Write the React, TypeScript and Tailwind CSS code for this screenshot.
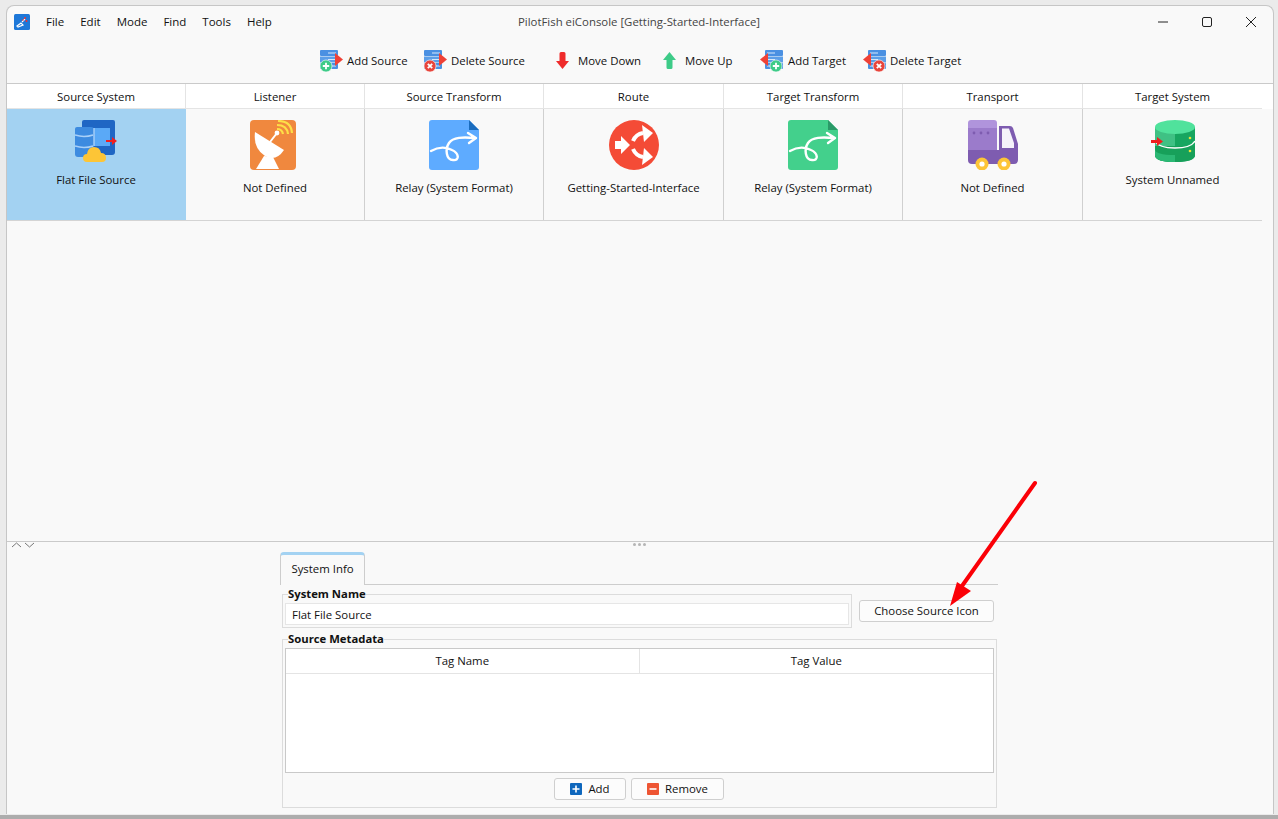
import type { ReactNode } from "react";

const font = "font-['Open_Sans','Liberation_Sans',sans-serif]";

function ServerIcon({ flip, badge }: { flip?: boolean; badge: "add" | "del" }) {
  // toolbar glyph: blue server, red arrow, round badge
  return (
    <svg width="23" height="22" viewBox="0 0 23 22">
      <g transform={flip ? "translate(23 0) scale(-1 1)" : undefined}>
        <rect x="0" y="0" width="18" height="6" rx="1" fill="#4a90e2" />
        <rect x="0" y="6.5" width="18" height="6" fill="#5b9ee8" />
        <rect x="0" y="13" width="18" height="6" rx="1" fill="#4a90e2" />
        <path d="M8 3h8M8 9.5h8M8 16h8" stroke="#d5e8fb" strokeWidth="1.2" />
        <path d="M15 3l8 6.5-8 6.5z" fill="#ef4136" />
      </g>
      <circle cx={flip ? 16 : 6} cy="16" r="6" fill={badge === "add" ? "#3ecb88" : "#e8453c"} stroke="#fff" strokeWidth="0.6" />
      {badge === "add" ? (
        <path d={flip ? "M16 12.8v6.4M12.8 16h6.4" : "M6 12.8v6.4M2.8 16h6.4"} stroke="#fff" strokeWidth="1.8" />
      ) : (
        <path d={flip ? "M13.8 13.8l4.4 4.4M18.2 13.8l-4.4 4.4" : "M3.8 13.8l4.4 4.4M8.2 13.8l-4.4 4.4"} stroke="#fff" strokeWidth="1.8" />
      )}
    </svg>
  );
}

function ArrowIcon({ up }: { up?: boolean }) {
  return (
    <svg width="15" height="17" viewBox="0 0 15 17">
      {up ? (
        <path d="M7.5 0L14 8H10.5V15.5Q10.5 17 9 17H6Q4.5 17 4.5 15.5V8H1z" fill="#3ecb88" />
      ) : (
        <path d="M7.5 17L14 9H10.5V1.5Q10.5 0 9 0H6Q4.5 0 4.5 1.5V9H1z" fill="#ef2b2b" />
      )}
    </svg>
  );
}

function SourceIcon() {
  return (
    <svg width="42" height="42" viewBox="0 0 42 42">
      <path d="M9 0H38Q40 0 40 2V32Q40 35 37 35H10Q7 35 7 32V2Q7 0 9 0Z" fill="#1f66c4" />
      <rect x="19" y="8" width="16" height="18" fill="#5aa9f7" />
      <path d="M2 7H16Q19 7 19 10V34Q19 37 16 37H3Q0 37 0 34V9Q0 7 2 7Z" fill="#3d8be0" />
      <path d="M0 15Q9 18 18 15M0 26Q9 29 18 26" stroke="#a9d0f8" strokeWidth="1.6" fill="none" />
      <path d="M19 8V26" stroke="#a9d0f8" strokeWidth="1.4" />
      <path d="M12 42Q8 42 8 38Q8 34 12 34Q13 27 19 27Q25 27 26 33Q31 33 31 38Q31 42 27 42Z" fill="#fdc536" />
      <path d="M31 20H37V17L42 21L37 25V22H31Z" fill="#f01f1f" />
    </svg>
  );
}

function DishIcon() {
  return (
    <svg width="46" height="50" viewBox="0 0 46 50" className="mr-[5px]">
      <rect width="46" height="50" rx="4" fill="#f0883e" />
      <path d="M5 12Q3 28 15 36Q26 42 34 30Z" fill="#fff" />
      <path d="M20 22L27 13" stroke="#fff" strokeWidth="2" />
      <circle cx="27" cy="13" r="2.4" fill="#fff" />
      <path d="M14 36L6 49H29L23 37Z" fill="#fff" />
      <path d="M27 9Q32 9 33 14M27 5Q37 5 38 14M28 1Q41 1 42 13" stroke="#fde047" strokeWidth="2.2" fill="none" />
    </svg>
  );
}

function DocIcon({ body, fold }: { body: string; fold: string }) {
  return (
    <svg width="50" height="50" viewBox="0 0 50 50">
      <path d="M3 0H40L50 10V47Q50 50 47 50H3Q0 50 0 47V3Q0 0 3 0Z" fill={body} />
      <path d="M40 0L50 10H40Z" fill={fold} />
      <path
        d="M2 31C9 27 17 27 23 30C30 33 31 41 24 40C17 40 16 29 20 23C24 17 34 17 46 18M39 13L47 18L40 23"
        stroke="#fff"
        strokeWidth="2.4"
        fill="none"
        strokeLinecap="round"
        strokeLinejoin="round"
      />
    </svg>
  );
}

function RouteIcon() {
  return (
    <svg width="50" height="50" viewBox="0 0 50 50">
      <circle cx="25" cy="25" r="25" fill="#f44b36" />
      <path d="M6 21H12V16L21 25L12 34V29H6Z" fill="#fff" />
      <path d="M24 21Q27 14 34 13" stroke="#fff" strokeWidth="4" fill="none" />
      <path d="M33 5L44 13L35 22Z" fill="#fff" />
      <path d="M24 29Q27 36 34 37" stroke="#fff" strokeWidth="4" fill="none" />
      <path d="M33 45L44 37L35 28Z" fill="#fff" />
    </svg>
  );
}

function TruckIcon() {
  return (
    <svg width="50" height="50" viewBox="0 0 50 50">
      <path d="M3 0H26Q29 0 29 3V8H0V3Q0 0 3 0Z" fill="#b094dc" />
      <rect x="0" y="8" width="29" height="22" fill="#9b7bcb" />
      <circle cx="6" cy="13" r="1.4" fill="#7e5cb0" />
      <circle cx="13" cy="13" r="1.4" fill="#7e5cb0" />
      <circle cx="20" cy="13" r="1.4" fill="#7e5cb0" />
      <path d="M31 6H42Q44 6 45 8L50 24V40Q50 44 46 44H31Z" fill="#7e5cb0" />
      <path d="M34 8.500H41L46 23V28H34Z" fill="#f5f2fa" />
      <path d="M0 30H34V44H4Q0 44 0 40Z" fill="#7e5cb0" />
      <circle cx="14" cy="44" r="6.500" fill="#fdc536" />
      <circle cx="14" cy="44" r="2.600" fill="#fff" />
      <circle cx="36" cy="44" r="6.500" fill="#fdc536" />
      <circle cx="36" cy="44" r="2.600" fill="#fff" />
    </svg>
  );
}

function DbIcon() {
  return (
    <svg width="44" height="42" viewBox="0 0 44 42">
      <path d="M4 7H44V35Q44 42 24 42Q4 42 4 35Z" fill="#17a660" />
      <path d="M4 7H24V42Q4 42 4 35Z" fill="#3fc184" />
      <path d="M4 26H44V35Q44 42 24 42Q4 42 4 35Z" fill="#17a05a" />
      <path d="M4 29Q4 35 24 35V42Q4 42 4 35Z" fill="#2bb874" />
      <ellipse cx="24" cy="7" rx="20" ry="7" fill="#50e29c" />
      <path d="M4 21Q8 28 24 28Q40 28 44 21" stroke="#fff" strokeWidth="1.4" fill="none" />
      <circle cx="39" cy="18" r="1.3" fill="#e8e337" />
      <circle cx="39" cy="31" r="1.3" fill="#e8e337" />
      <path d="M0 20H6V17L12 21.500L6 26V23H0Z" fill="#f01f1f" />
    </svg>
  );
}

const columns: { head: string; label: string; icon: ReactNode; selected?: boolean }[] = [
  { head: "Source System", label: "Flat File Source", icon: <SourceIcon />, selected: true },
  { head: "Listener", label: "Not Defined", icon: <DishIcon /> },
  { head: "Source Transform", label: "Relay (System Format)", icon: <DocIcon body="#5eabff" fold="#1a6cbe" /> },
  { head: "Route", label: "Getting-Started-Interface", icon: <RouteIcon /> },
  { head: "Target Transform", label: "Relay (System Format)", icon: <DocIcon body="#43d08c" fold="#2a9a68" /> },
  { head: "Transport", label: "Not Defined", icon: <TruckIcon /> },
  { head: "Target System", label: "System Unnamed", icon: <DbIcon /> },
];

const toolbar: { label: string; icon: ReactNode; w: string; gap: string }[] = [
  { label: "Add Source", icon: <ServerIcon badge="add" />, w: "w-[104px]", gap: "gap-[4px]" },
  { label: "Delete Source", icon: <ServerIcon badge="del" />, w: "w-[131px]", gap: "gap-[4px]" },
  { label: "Move Down", icon: <ArrowIcon />, w: "w-[107px]", gap: "gap-[8px]" },
  { label: "Move Up", icon: <ArrowIcon up />, w: "w-[98px]", gap: "gap-[8px]" },
  { label: "Add Target", icon: <ServerIcon flip badge="add" />, w: "w-[103px]", gap: "gap-[5px]" },
  { label: "Delete Target", icon: <ServerIcon flip badge="del" />, w: "w-[130px]", gap: "gap-[4px]" },
];

const menus = ["File", "Edit", "Mode", "Find", "Tools", "Help"];

const stageCols = "grid grid-cols-[179px_179px_179px_180px_179px_180px_179px] w-[1255px]";

function Legend({ children }: { children: ReactNode }) {
  return <legend className="ml-[3px] font-bold text-[11.3px] leading-[12px] text-[#111]">{children}</legend>;
}

function SmallButton({ children, w }: { children: ReactNode; w: string }) {
  return (
    <button className={`${w} h-[22px] flex items-center justify-center gap-[6px] rounded-[3px] border border-[#cfcfcf] bg-[#fcfcfc] text-[11.4px] text-[#111]`}>
      {children}
    </button>
  );
}

export default function App() {
  return (
    <div className={`${font} relative w-[1278px] h-[819px] overflow-hidden bg-[#ebebeb] text-[11.4px] text-[#111] flex flex-col`}>
      <div className="flex-1 pt-[5px] pl-[6px] pr-[4px]">
        <div className="h-[809px] rounded-t-[8px] border border-b-0 border-[#c6c6c6] bg-[#f9f9f9] flex flex-col">
          {/* title bar */}
          <div className="relative h-[36px] shrink-0 flex items-center pl-[7px] pb-[5px]">
            <svg width="16" height="16" viewBox="0 0 16 16">
              <rect width="16" height="16" rx="1.500" fill="#1e78d8" />
              <path d="M3 12l4-3 2 2-5 2zM8 8l3-3" stroke="#fff" strokeWidth="1.2" fill="none" />
              <circle cx="11" cy="4" r="1" fill="#f03030" />
              <circle cx="12.500" cy="7" r="1" fill="#f03030" />
              <circle cx="9" cy="6" r="0.8" fill="#f03030" />
            </svg>
            <div className="ml-[16px] flex gap-[16px] text-[11.500px]">
              {menus.map((m) => (
                <span key={m}>{m}</span>
              ))}
            </div>
            <div className="absolute inset-x-0 text-center text-[#444] text-[11.400px] pr-[2px]">PilotFish eiConsole [Getting-Started-Interface]</div>
            <div className="ml-auto flex items-center gap-[34px] pr-[17px]">
              <svg width="10" height="10" viewBox="0 0 10 10"><path d="M0 5h10" stroke="#222" /></svg>
              <svg width="10" height="10" viewBox="0 0 10 10"><rect x="0.500" y="0.500" width="9" height="9" rx="1.500" fill="none" stroke="#222" /></svg>
              <svg width="10" height="10" viewBox="0 0 10 10"><path d="M0 0l10 10M10 0L0 10" stroke="#222" /></svg>
            </div>
          </div>

          {/* toolbar */}
          <div className="h-[41px] shrink-0 flex items-center pl-[313px] pb-[4px]">
            {toolbar.map((t) => (
              <div key={t.label} className={`${t.w} flex items-center ${t.gap}`}>
                {t.icon}
                <span>{t.label}</span>
              </div>
            ))}
          </div>

          {/* pipeline stages */}
          <div className="shrink-0 border-t border-[#cacaca] bg-white">
            <div className={stageCols}>
              {columns.map((c) => (
                <div key={c.head} className="h-[25px] pt-[1px] flex items-center justify-center border-r last:border-r-0 border-b border-[#e4e4e4]">
                  {c.head}
                </div>
              ))}
            </div>
          </div>
          <div className={`shrink-0 border-b border-[#d4d4d4] ${stageCols}`}>
            {columns.map((c) => (
              <div
                key={c.head}
                className={`h-[111px] pt-[11px] flex flex-col items-center border-r last:border-r-0 ${c.selected ? "bg-[#a3d2f2] border-[#a3d2f2]" : "border-[#d0d0d0]"}`}
              >
                {c.icon}
                <span className="mt-[9px]">{c.label}</span>
              </div>
            ))}
          </div>
          <div className="flex-1" />

          {/* splitter */}
          <div className="h-[9px] shrink-0 border-t border-[#cacaca] flex items-start pl-[4px]">
            <svg width="26" height="6" viewBox="0 0 26 6">
              <path d="M1 5l4.500-4 4.500 4M14 1l4.500 4 4.500-4" stroke="#777" fill="none" />
            </svg>
            <div className="ml-[596px] mt-[1px] flex gap-[2px]">
              <i className="size-[3px] rounded-full bg-[#b5b5b5]" />
              <i className="size-[3px] rounded-full bg-[#b5b5b5]" />
              <i className="size-[3px] rounded-full bg-[#b5b5b5]" />
            </div>
          </div>

          {/* detail panel */}
          <div className="shrink-0 h-[264px] pl-[274px] pt-[2px]">
            <div className="w-[717px]">
              <div className="flex items-end h-[33px] -ml-[1px] border-b border-[#cdcdcd]">
                <div className="w-[85px] h-[33px] -mb-[1px] pb-[2px] rounded-t-[4px] border border-[#cdcdcd] border-b-0 border-t-[3px] border-t-[#a3d2f2] bg-[#f9f9f9] flex items-center justify-center">
                  System Info
                </div>
              </div>
              <div className="flex items-start mt-[3px] pl-[1px]">
                <fieldset className="w-[570px] h-[40px] border border-[#dcdcdc] px-[2px]">
                  <Legend>System Name</Legend>
                  <div className="h-[22px] pt-[1px] border border-[#e6e6e6] bg-white pl-[6px] flex items-center mt-[3px]">Flat File Source</div>
                </fieldset>
                <button className="ml-[7px] mt-[12px] w-[135px] h-[22px] rounded-[3px] border border-[#cfcfcf] bg-[#fcfcfc] text-[11.4px] text-[#111]">
                  Choose Source Icon
                </button>
              </div>
              <fieldset className="mt-[5px] ml-[1px] w-[715px] h-[175px] border border-[#dcdcdc] px-[2px]">
                <Legend>Source Metadata</Legend>
                <div className="h-[125px] mt-[3px] border border-[#c9c9c9] bg-white">
                  <div className="grid grid-cols-2 h-[25px] border-b border-[#e4e4e4]">
                    <div className="flex items-center justify-center border-r border-[#e4e4e4]">Tag Name</div>
                    <div className="flex items-center justify-center">Tag Value</div>
                  </div>
                </div>
                <div className="mt-[5px] flex justify-center gap-[5px] pr-[1px]">
                  <SmallButton w="w-[72px]">
                    <svg width="12" height="12" viewBox="0 0 12 12">
                      <rect width="12" height="12" rx="1" fill="#0f67bd" />
                      <path d="M6 2.500v7M2.500 6h7" stroke="#fff" strokeWidth="1.6" />
                    </svg>
                    Add
                  </SmallButton>
                  <SmallButton w="w-[93px]">
                    <svg width="12" height="12" viewBox="0 0 12 12">
                      <rect width="12" height="12" rx="1" fill="#ee5533" />
                      <path d="M2.500 6h7" stroke="#fff" strokeWidth="1.6" />
                    </svg>
                    Remove
                  </SmallButton>
                </div>
              </fieldset>
            </div>
          </div>
        </div>
      </div>
      <div className="h-[4px] shrink-0 bg-[#adadad]" />

      {/* annotation arrow */}
      <svg className="absolute inset-0 pointer-events-none" width="1278" height="819" viewBox="0 0 1278 819">
        <path d="M1035 483L962 586" stroke="#fb0007" strokeWidth="4" strokeLinecap="round" />
        <path d="M950 606L957 582L971 591Z" fill="#fb0007" />
      </svg>
    </div>
  );
}
